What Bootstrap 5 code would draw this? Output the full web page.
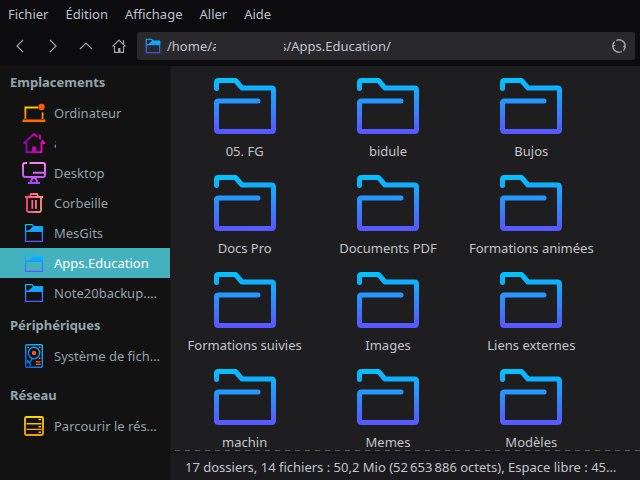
<!DOCTYPE html>
<html lang="fr">
<head>
<meta charset="utf-8">
<meta name="viewport" content="width=device-width, initial-scale=1">
<title>Apps.Education</title>
<link href="https://cdn.jsdelivr.net/npm/bootstrap@5.3.0/dist/css/bootstrap.min.css" rel="stylesheet">
<style>
body{font-family:"Noto Sans",sans-serif;font-size:13px;line-height:20px;background:#0c0c0e;color:#bfc0cc}
a{color:inherit;text-decoration:none}
.menubar{height:28px;padding-left:8px;gap:17px}
.menubar a{padding:4px 0;color:#bfc0cc}
.toolbar{height:38px;padding:4px 5px 6px 3px}
.tool-btn{width:33px;height:28px;border:0;background:none;color:#a0a1aa;padding:0}
.tool-btn svg{display:block;margin:0 auto}
.address{height:28px;background:#29292c;border-radius:2px;margin-left:2px;padding:0 8px;gap:6px}
.address input{background:none;border:0;outline:0;color:#c3c4cf;padding:0;min-width:0;height:28px}
.redaction{left:79px;top:4px;width:68px;height:20px;background:#29292c}
.places{width:171px;background:#121213;color:#93a1a8;border-right:1px solid #18181a}
.places h2{font-size:13px;line-height:20px;font-weight:700;color:#93a5ad;margin:0;padding:6px 10px}
.places h2.devices{padding:7px 10px 6px}
.places h2.network{padding:14px 10px 6px}
.place{height:30px;padding:0 8px 0 22px;gap:8px}
.place.active{background:#44b1bf;color:#fff}
.place svg{width:24px;height:24px;flex:none}
.hidden-name{width:2px;overflow:hidden}
.files{background:#1e1e20;padding:3px 37px 0 2px}
.file{height:97px;padding-top:6px;color:#c3c4cb}
.file svg{width:66px;height:62px;display:block}
.file span{line-height:20px;white-space:nowrap;margin-top:4px}
.divider{background:#1e1e20;height:2px}
.dashes{height:1px;margin-left:4px;background:repeating-linear-gradient(90deg,#58585a 0 5px,transparent 5px 10px)}
.status{height:28px;background:#1a1a1f;border-top:1px solid #101012;padding:4px 14px;color:#c3c4cb}
</style>
</head>
<body class="vh-100 d-flex flex-column overflow-hidden">
<svg width="0" height="0" class="position-absolute" aria-hidden="true">
<defs>
<linearGradient id="blue" gradientUnits="userSpaceOnUse" x1="0" y1="3" x2="0" y2="59"><stop stop-color="#00c4ff"/><stop offset="1" stop-color="#5a55ff"/></linearGradient>
<linearGradient id="mini" gradientUnits="userSpaceOnUse" x1="0" y1="3" x2="0" y2="21"><stop stop-color="#00c4ff"/><stop offset=".45" stop-color="#1e96ff"/><stop offset="1" stop-color="#5a55ff"/></linearGradient>
<linearGradient id="orange" gradientUnits="userSpaceOnUse" x1="0" y1="5" x2="0" y2="21"><stop stop-color="#ffd000"/><stop offset="1" stop-color="#ff6400"/></linearGradient>
<linearGradient id="magenta" gradientUnits="userSpaceOnUse" x1="2" y1="0" x2="22" y2="0"><stop stop-color="#9000a8"/><stop offset="1" stop-color="#ff00d0"/></linearGradient>
<linearGradient id="violet" gradientUnits="userSpaceOnUse" x1="0" y1="1" x2="0" y2="23"><stop stop-color="#ff80ea"/><stop offset="1" stop-color="#a244ff"/></linearGradient>
<linearGradient id="rose" gradientUnits="userSpaceOnUse" x1="3" y1="0" x2="21" y2="0"><stop stop-color="#ff3d86"/><stop offset="1" stop-color="#ff9a80"/></linearGradient>
<linearGradient id="disk" gradientUnits="userSpaceOnUse" x1="3" y1="22" x2="21" y2="2"><stop stop-color="#0068e8"/><stop offset="1" stop-color="#18b8ff"/></linearGradient>
<linearGradient id="gold" gradientUnits="userSpaceOnUse" x1="0" y1="2" x2="0" y2="22"><stop stop-color="#ffd500"/><stop offset="1" stop-color="#f59a00"/></linearGradient>
<symbol id="folder" viewBox="0 0 66 62"><path d="M4.500 13.500V7.500q0-2 2-2H23.500l6.500 7.500H59.500q2 0 2 2V54.500q0 2-2 2H6.500q-2 0-2-2V28q0-2 2-2H46" fill="none" stroke="url(#blue)" stroke-width="5" stroke-linecap="round" stroke-linejoin="round"/></symbol>
<symbol id="minifolder" viewBox="0 0 24 24"><path d="M3.500 11V9.500h3L11 5.500h10V11z" fill="url(#mini)"/><path d="M3.600 10.500V3.600H10l2.500 2.400H20.400V20.400H3.600V10" fill="none" stroke="url(#mini)" stroke-width="1.300" stroke-linejoin="round"/></symbol>
</defs></svg>
<nav class="menubar d-flex" aria-label="Menu"><a href="#">Fichier</a><a href="#">Édition</a><a href="#">Affichage</a><a href="#">Aller</a><a href="#">Aide</a></nav>
<div class="toolbar d-flex">
<button class="tool-btn" aria-label="Précédent"><svg width="16" height="16" viewBox="0 0 16 16" fill="none" stroke="currentColor" stroke-width="1.200"><path d="M11 2 5 8l6 6"/></svg></button>
<button class="tool-btn" aria-label="Suivant"><svg width="16" height="16" viewBox="0 0 16 16" fill="none" stroke="currentColor" stroke-width="1.200"><path d="m5 2 6 6-6 6"/></svg></button>
<button class="tool-btn" aria-label="Dossier parent"><svg width="16" height="16" viewBox="0 0 16 16" fill="none" stroke="currentColor" stroke-width="1.200"><path d="m2 11 6-6 6 6"/></svg></button>
<button class="tool-btn" aria-label="Dossier personnel"><svg width="16" height="16" viewBox="0 0 16 16" fill="none" stroke="currentColor" stroke-width="1.200"><path d="m1.500 8.500 6.500-6.500 6.500 6.500M12.500 2v4M3.500 8v6.400h9V8"/><path d="M7 10h2.500v4H7z" fill="currentColor" stroke="none"/></svg></button>
<div class="address d-flex align-items-center flex-fill position-relative">
<svg width="16" height="16" viewBox="2 2 20 20" aria-hidden="true"><use href="#minifolder" width="24" height="24"/></svg>
<input class="flex-fill" type="text" aria-label="Emplacement" value="/home/a&nbsp;&nbsp;&nbsp;&nbsp;&nbsp;&nbsp;&nbsp;&nbsp;&nbsp;&nbsp;&nbsp;&nbsp;&nbsp;&nbsp;&nbsp;&nbsp;&nbsp;&nbsp;s/Apps.Education/">
<span class="redaction position-absolute"></span>
<button class="tool-btn w-auto" aria-label="Actualiser"><svg width="16" height="16" viewBox="0 0 16 16" fill="none" stroke="currentColor" stroke-width="1.400"><path d="M1.800 8.500A6.200 6.200 0 0 1 3.600 3.600M5.200 2.500A6.200 6.200 0 0 1 14.200 7.500M14.200 8.500A6.200 6.200 0 0 1 12.400 12.400M10.800 13.500A6.200 6.200 0 0 1 1.800 8.500"/><path d="M1 6.500 4.500 7 2 9.500zM15 9.500 11.500 9 14 6.500z" fill="currentColor" stroke="none"/></svg></button>
</div>
</div>
<div class="d-flex flex-fill overflow-hidden">
<aside class="places flex-shrink-0">
<h2>Emplacements</h2>
<a href="#" class="place d-flex align-items-center"><svg viewBox="0 0 24 24" fill="none" stroke="url(#orange)" stroke-width="1.800"><path d="M3.400 18V6.500H16M20.600 11.500V18"/><path d="M1.500 19.400h21v.800h-21z"/><circle cx="19.500" cy="6" r="3.200" fill="#ff5a00" stroke="none"/></svg><span>Ordinateur</span></a>
<a href="#" class="place d-flex align-items-center"><svg viewBox="0 0 24 24" fill="none" stroke="url(#magenta)" stroke-width="1.800"><path d="M1.500 12.500 12 3l3.500 3M2 12h2.500v9.200h15V12H22l-2-3M17.500 3.500l.800 5"/><path d="M10 15.500h4V21h-4z" fill="url(#magenta)" stroke="none"/></svg><span class="hidden-name">a</span></a>
<a href="#" class="place d-flex align-items-center"><svg viewBox="0 0 24 24" fill="none" stroke="url(#violet)" stroke-width="2"><path d="M5 2H3Q1 2 1 4v10q0 2 2 2h18q2 0 2-2V4q0-2-2-2H7.500M11 11.800h12M8.500 21.500 10.500 17h3l2 4.500M6 22h12"/></svg><span>Desktop</span></a>
<a href="#" class="place d-flex align-items-center"><svg viewBox="0 0 24 24" fill="none" stroke="url(#rose)" stroke-width="1.800"><path d="M3 6h18M5 6v13.500q0 1.500 1.500 1.500h11q1.500 0 1.500-1.500V6M8 5.500 9 3h6l1 2.500M10.300 9v8.700M13.900 9v8.700"/></svg><span>Corbeille</span></a>
<a href="#" class="place d-flex align-items-center"><svg><use href="#minifolder" width="24" height="24"/></svg><span>MesGits</span></a>
<a href="#" class="place active d-flex align-items-center"><svg><use href="#minifolder" width="24" height="24"/></svg><span>Apps.Education</span></a>
<a href="#" class="place d-flex align-items-center"><svg><use href="#minifolder" width="24" height="24"/></svg><span class="text-nowrap">Note20backup.…</span></a>
<h2 class="devices">Périphériques</h2>
<a href="#" class="place d-flex align-items-center"><svg viewBox="0 0 24 24" fill="none" stroke="url(#disk)" stroke-width="1.400"><rect x="3.700" y=".700" width="16.600" height="22.600" rx="1"/><circle cx="12" cy="9" r="5.700"/><path d="m10.500 14-3 5M4.500 18q4 0 4 4M5 16l3 3"/><circle cx="12" cy="9" r="2.200" fill="#ff5030" stroke="none"/><path d="M14 17.700h4.500M14 20.300h4.500" stroke="#ff4a20"/><path d="M5.500 3.300h1.400M17 3.300h1.400M17 14.300h1.400" stroke="#ff6a20"/></svg><span class="text-nowrap">Système de fich…</span></a>
<h2 class="network">Réseau</h2>
<a href="#" class="place d-flex align-items-center"><svg viewBox="0 0 24 24" fill="none" stroke="url(#gold)" stroke-width="1.800"><rect x="3" y="3" width="18" height="18" rx="1.500"/><path d="M4.500 9.700H19v.100H4.500M4.500 15.300H19v.100H4.500" stroke-width="1.200"/><path d="M16.500 5.500h2.500M16.500 12.700h2.500M16.500 18.300h2.500" stroke-width="1.400"/></svg><span class="text-nowrap">Parcourir le rés…</span></a>
</aside>
<main class="d-flex flex-column flex-fill overflow-hidden">
<div class="files flex-fill overflow-hidden"><div class="row row-cols-3 g-0">
<div class="file col d-flex flex-column align-items-center"><svg><use href="#folder"/></svg><span>05. FG</span></div>
<div class="file col d-flex flex-column align-items-center"><svg><use href="#folder"/></svg><span>bidule</span></div>
<div class="file col d-flex flex-column align-items-center"><svg><use href="#folder"/></svg><span>Bujos</span></div>
<div class="file col d-flex flex-column align-items-center"><svg><use href="#folder"/></svg><span>Docs Pro</span></div>
<div class="file col d-flex flex-column align-items-center"><svg><use href="#folder"/></svg><span>Documents PDF</span></div>
<div class="file col d-flex flex-column align-items-center"><svg><use href="#folder"/></svg><span>Formations animées</span></div>
<div class="file col d-flex flex-column align-items-center"><svg><use href="#folder"/></svg><span>Formations suivies</span></div>
<div class="file col d-flex flex-column align-items-center"><svg><use href="#folder"/></svg><span>Images</span></div>
<div class="file col d-flex flex-column align-items-center"><svg><use href="#folder"/></svg><span>Liens externes</span></div>
<div class="file col d-flex flex-column align-items-center"><svg><use href="#folder"/></svg><span>machin</span></div>
<div class="file col d-flex flex-column align-items-center"><svg><use href="#folder"/></svg><span>Memes</span></div>
<div class="file col d-flex flex-column align-items-center"><svg><use href="#folder"/></svg><span>Modèles</span></div>
</div></div>
<div class="divider flex-shrink-0"><div class="dashes"></div></div>
<footer class="status flex-shrink-0 text-nowrap">17 dossiers, 14 fichiers : 50,2 Mio (52&#8239;653&#8239;886 octets), Espace libre : 45…</footer>
</main>
</div>
<script src="https://cdn.jsdelivr.net/npm/bootstrap@5.3.0/dist/js/bootstrap.bundle.min.js"></script>
</body>
</html>
